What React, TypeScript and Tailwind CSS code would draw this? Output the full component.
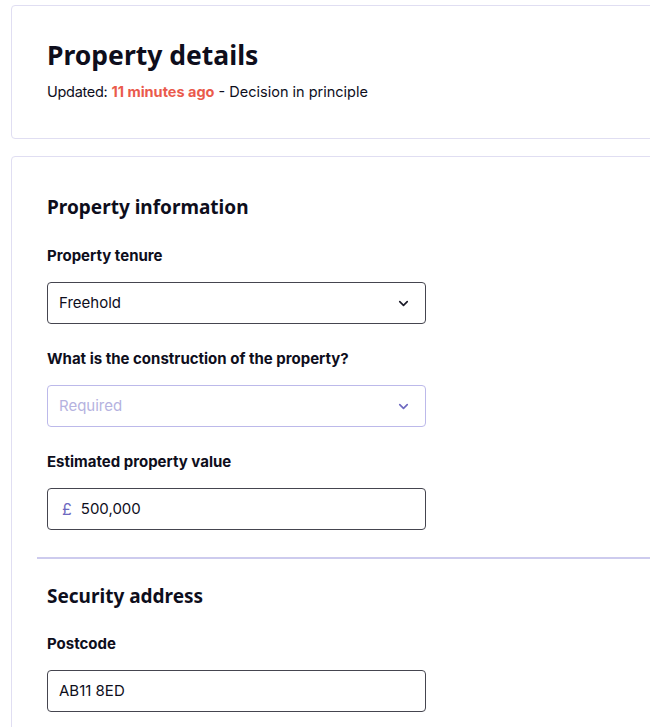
import { ChevronDown } from 'lucide-react'

const ink = 'text-[#0e0e1c]'

function Label({ children }: { children: React.ReactNode }) {
  return (
    <div className={`font-['Inter',sans-serif] text-[15px] font-bold leading-[22px] ${ink}`}>
      {children}
    </div>
  )
}

function Select({ value, placeholder }: { value?: string; placeholder?: string }) {
  const empty = !value
  return (
    <div
      className={`mt-[15px] flex h-[42px] w-[379px] items-center justify-between rounded-[4px] border bg-white pl-[11px] pr-[14px] ${
        empty ? 'border-[#bcb9ea]' : 'border-[#45454f]'
      }`}
    >
      <span className={`text-[15px] ${empty ? 'text-[#b5b2e0]' : ink}`}>{value || placeholder}</span>
      <ChevronDown
        className={`h-[15px] w-[15px] ${empty ? 'text-[#6e69c0]' : 'text-[#1a1a28]'}`}
        strokeWidth={2.6}
      />
    </div>
  )
}

function TextInput({ value, prefix }: { value: string; prefix?: string }) {
  return (
    <div className="mt-[15px] flex h-[42px] w-[379px] items-center rounded-[4px] border border-[#45454f] bg-white pl-[11px]">
      {prefix && <span className="ml-[3px] mr-[9px] text-[16px] text-[#6e69c0]">{prefix}</span>}
      <span className={`text-[15px] ${ink}`}>{value}</span>
    </div>
  )
}

export default function App() {
  return (
    <div className="min-h-screen w-[650px] overflow-hidden bg-white font-['Inter',sans-serif]">
      <div className="pl-[11px] pt-[5px]">
        {/* Header card */}
        <div className="w-[700px] rounded-[4px] border border-[#e0def2] pb-[36px] pl-[35px] pt-[33px]">
          <h1 className={`font-['Noto_Sans',sans-serif] text-[26.5px] font-bold leading-[32px] ${ink}`}>
            Property details
          </h1>
          <p className={`mt-[11px] text-[14.5px] leading-[20px] ${ink}`}>
            <span className="tracking-[-0.3px]">Updated:</span>{' '}
            <span className="font-bold text-[#ea5a4c]">11 minutes ago</span> - Decision in principle
          </p>
        </div>

        {/* Form card */}
        <div className="mt-[17px] w-[700px] rounded-[4px] border border-[#e0def2] pt-[36px]">
          <div className="pl-[35px]">
            <h2 className={`font-['Noto_Sans',sans-serif] text-[19px] font-bold leading-[28px] ${ink}`}>
              Property information
            </h2>
            <div className="mt-[24px]">
              <Label>Property tenure</Label>
              <Select value="Freehold" />
            </div>
            <div className="mt-[24px]">
              <Label>What is the construction of the property?</Label>
              <Select placeholder="Required" />
            </div>
            <div className="mt-[24px]">
              <Label>Estimated property value</Label>
              <TextInput prefix="£" value="500,000" />
            </div>
          </div>

          <div className="ml-[25px] mt-[27px] h-[2px] bg-[#cdcbee]" />

          <div className="pl-[35px] pt-[23px] pb-[40px]">
            <h2 className={`font-['Noto_Sans',sans-serif] text-[19px] font-bold leading-[28px] ${ink}`}>
              Security address
            </h2>
            <div className="mt-[23px]">
              <Label>Postcode</Label>
              <TextInput value="AB11 8ED" />
            </div>
          </div>
        </div>
      </div>
    </div>
  )
}
